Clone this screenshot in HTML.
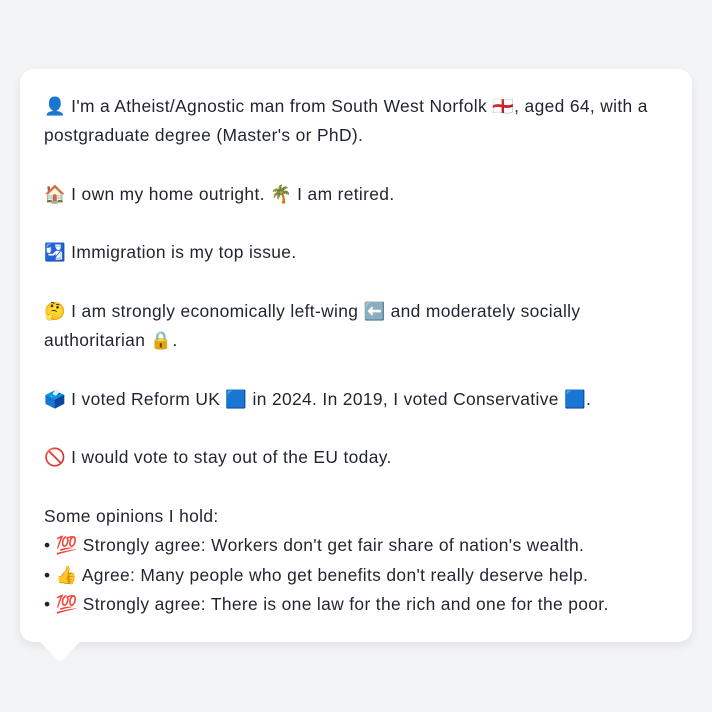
<!DOCTYPE html>
<html><head><meta charset="utf-8"><style>
html,body{margin:0;padding:0;background:#f3f4f6;width:712px;height:712px;overflow:hidden}
.card{position:absolute;left:20px;top:69px;width:672px;height:573px;background:#fff;border-radius:14px;box-shadow:0 4px 10px rgba(0,0,0,0.08)}
.tail{position:absolute;left:40px;top:642px;width:0;height:0;border-left:20px solid transparent;border-right:20px solid transparent;border-top:20px solid #fff}
.txt{position:absolute;left:24px;top:23px;font-family:"Liberation Sans","Noto Sans CJK JP",sans-serif;font-size:17.4px;letter-spacing:0.35px;line-height:29.28px;color:#1f2430;white-space:nowrap}
</style></head><body>
<div class="card"><div class="txt">👤 I'm a Atheist/Agnostic man from South West Norfolk 🏴󠁧󠁢󠁥󠁮󠁧󠁿, aged 64, with a<br>postgraduate degree (Master's or PhD).<br><br>🏠 I own my home outright. 🌴 I am retired.<br><br>🛂 Immigration is my top issue.<br><br>🤔 I am strongly economically left-wing ⬅️ and moderately socially<br>authoritarian 🔒.<br><br>🗳️ I voted Reform UK 🟦 in 2024. In 2019, I voted Conservative 🟦.<br><br>🚫 I would vote to stay out of the EU today.<br><br>Some opinions I hold:<br>• 💯 Strongly agree: Workers don't get fair share of nation's wealth.<br>• 👍 Agree: Many people who get benefits don't really deserve help.<br>• 💯 Strongly agree: There is one law for the rich and one for the poor.</div></div>
<div class="tail"></div>
</body></html>
